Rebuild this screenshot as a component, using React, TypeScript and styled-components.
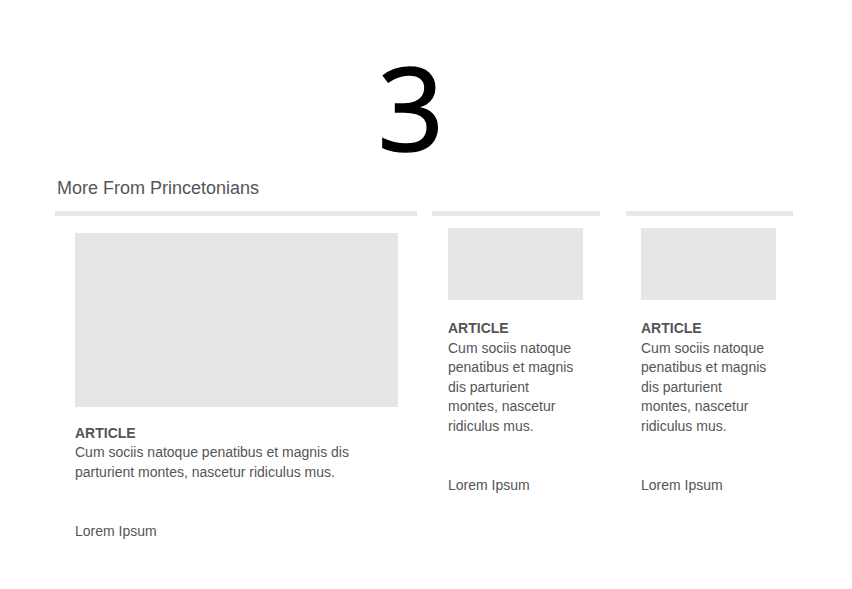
import styled, { createGlobalStyle } from 'styled-components';

const GlobalStyle = createGlobalStyle`
  body {
    margin: 0;
    background: #ffffff;
    font-family: 'Liberation Sans', Arial, sans-serif;
  }
`;

const articles = [
  {
    id: 1,
    size: 'large' as const,
    width: 362,
    offset: 0,
    inset: 20,
    imgW: 323,
    imgH: 174,
    textW: 323,
  },
  {
    id: 2,
    size: 'small' as const,
    width: 168,
    offset: 15,
    inset: 16,
    imgW: 135,
    imgH: 72,
    textW: 128,
  },
  {
    id: 3,
    size: 'small' as const,
    width: 167,
    offset: 26,
    inset: 15,
    imgW: 135,
    imgH: 72,
    textW: 128,
  },
];

const Page = styled.main`
  width: 852px;
  height: 589px;
  padding: 46px 0 0 55px;
  box-sizing: border-box;
`;

// big page number, a touch heavier than Open Sans regular
const PageNumber = styled.div`
  width: 712px;
  text-align: center;
  font-family: 'Open Sans', 'Noto Sans', sans-serif;
  font-size: 116px;
  font-weight: 400;
  line-height: 120px;
  height: 120px;
  color: #000;
  -webkit-text-stroke: 1.6px #000;
`;

const SectionTitle = styled.h2`
  margin: 11px 0 0 2px;
  font-size: 18px;
  line-height: 22px;
  font-weight: 400;
  color: #555;
`;

const Row = styled.div`
  display: flex;
  align-items: flex-start;
  margin-top: 12px;
`;

const Card = styled.article<{ $width: number; $offset: number }>`
  width: ${p => p.$width}px;
  margin-left: ${p => p.$offset}px;
  flex: none;
`;

const Bar = styled.div`
  height: 5px;
  background: #e8e8e8;
`;

const Body = styled.div<{ $inset: number; $large: boolean }>`
  padding-left: ${p => p.$inset}px;
  padding-top: ${p => (p.$large ? 17 : 12)}px;
`;

const Thumb = styled.div<{ $w: number; $h: number }>`
  width: ${p => p.$w}px;
  height: ${p => p.$h}px;
  background: #e6e6e6;
`;

const Kicker = styled.div<{ $large: boolean }>`
  margin-top: ${p => (p.$large ? 18 : 19)}px;
  font-size: 14px;
  line-height: ${p => (p.$large ? 17 : 19.5)}px;
  font-weight: 700;
  color: #555;
`;

const Summary = styled.p<{ $w: number; $large: boolean }>`
  margin: 0;
  width: ${p => p.$w}px;
  font-size: 14px;
  line-height: ${p => (p.$large ? 20 : 19.5)}px;
  color: #555;
`;

const Byline = styled.div<{ $large: boolean }>`
  margin-top: ${p => (p.$large ? 39 : 38.5)}px;
  font-size: 14px;
  line-height: 20px;
  color: #555;
`;

const App = () => {
  return (
    <>
      <GlobalStyle />
      <Page>
        <PageNumber>3</PageNumber>
        <SectionTitle>More From Princetonians</SectionTitle>
        <Row>
          {articles.map((a) => {
            const large = a.size === 'large';
            return (
              <Card key={a.id} $width={a.width} $offset={a.offset}>
                <Bar />
                <Body $inset={a.inset} $large={large}>
                  <Thumb $w={a.imgW} $h={a.imgH} />
                  <Kicker $large={large}>ARTICLE</Kicker>
                  <Summary $w={a.textW} $large={large}>
                    Cum sociis natoque penatibus et magnis dis parturient montes, nascetur ridiculus mus.
                  </Summary>
                  <Byline $large={large}>Lorem Ipsum</Byline>
                </Body>
              </Card>
            );
          })}
        </Row>
      </Page>
    </>
  );
};

export default App;
